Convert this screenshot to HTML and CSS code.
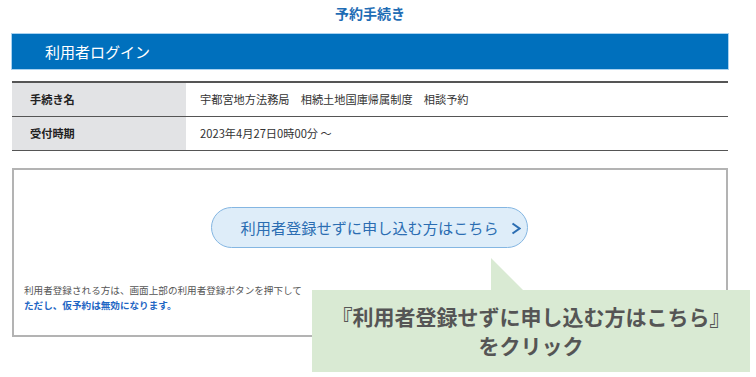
FILE: index.html
```html
<html>
	<head>
		<title>予約手続き</title>
		<link rel="stylesheet" href="styles.css">
	</head>
	<body>
		<div class="page">
			<h1 class="title">予約手続き</h1>
			<div class="bar">利用者ログイン</div>
			<table class="info">
				<tr>
					<th>手続き名</th>
					<td>宇都宮地方法務局　相続土地国庫帰属制度　相談予約</td>
				</tr>
				<tr>
					<th>受付時期</th>
					<td>2023年4月27日0時00分 ～</td>
				</tr>
			</table>
			<div class="box">
				<div class="btn-row">
					<a class="btn">利用者登録せずに申し込む方はこちら<svg class="chev" width="10" height="13" viewBox="0 0 10 13"><polyline points="1.5,1.5 8.5,6.5 1.5,11.5" fill="none" stroke="#2b6db2" stroke-width="2"/></svg></a>
				</div>
				<p class="note">利用者登録される方は、画面上部の利用者登録ボタンを押下して</p>
				<p class="note blue">ただし、仮予約は無効になります。</p>
			</div>
		</div>
		<div class="callout">
			<div class="tail"></div>
			<div>『利用者登録せずに申し込む方はこちら』</div>
			<div>をクリック</div>
		</div>
	</body>
</html>
```
FILE: styles.css
```css
body
{
	margin: 0;
	background: #ffffff;
	font-family: "Noto Sans CJK JP", "Noto Sans", sans-serif;
	color: #333333;
}

.page
{
	width: 716px;
	margin-left: 12px;
}

.title
{
	margin: 0;
	height: 34px;
	line-height: 26px;
	text-align: center;
	font-size: 14px;
	font-weight: bold;
	color: #1f6db5;
}

.bar
{
	height: 35px;
	line-height: 35px;
	padding-left: 33px;
	background: #0070bd;
	color: #ffffff;
	font-size: 15px;
	box-shadow: 0 0 0 1px #a9d2f0;
}

.info
{
	width: 100%;
	margin-top: 12px;
	border-collapse: collapse;
	border-top: 2px solid #555555;
	font-size: 11.2px;
}
.info tr
{
	border-bottom: 1px solid #555555;
}
.info th
{
	width: 156px;
	height: 34px;
	padding: 0 0 0 18px;
	text-align: left;
	background: #e2e3e5;
	font-weight: bold;
	color: #222222;
}
.info td
{
	padding-left: 14px;
	color: #333333;
}

.box
{
	margin-top: 17px;
	height: 169px;
	border: 2px solid #b3b3b3;
	box-sizing: border-box;
	padding: 0 10px;
}

.btn-row
{
	display: flex;
	justify-content: center;
	padding-top: 37px;
	padding-right: 2px;
}
.btn
{
	display: flex;
	align-items: center;
	width: 317px;
	height: 41px;
	box-sizing: border-box;
	padding-left: 29px;
	border: 1px solid #84b6e2;
	border-radius: 21px;
	background: #deedf9;
	color: #2b6db2;
	font-size: 15.2px;
}
.chev
{
	margin-left: 12px;
	margin-top: 2px;
}

.note
{
	margin: 0;
	font-size: 9.6px;
	line-height: 15px;
	color: #555555;
}
.btn-row + .note
{
	margin-top: 35px;
}
.note.blue
{
	color: #1f66c4;
	font-weight: bold;
}

.callout
{
	position: absolute;
	left: 312px;
	top: 290px;
	width: 438px;
	height: 82px;
	background: #d9ead3;
	box-sizing: border-box;
	padding-top: 12px;
	text-align: center;
	color: #555555;
	font-weight: bold;
	font-size: 21px;
	line-height: 29px;
}
.tail
{
	position: absolute;
	left: 179px;
	top: -32px;
	width: 0;
	height: 0;
	border-left: 32px solid #d9ead3;
	border-top: 32px solid transparent;
}
```
